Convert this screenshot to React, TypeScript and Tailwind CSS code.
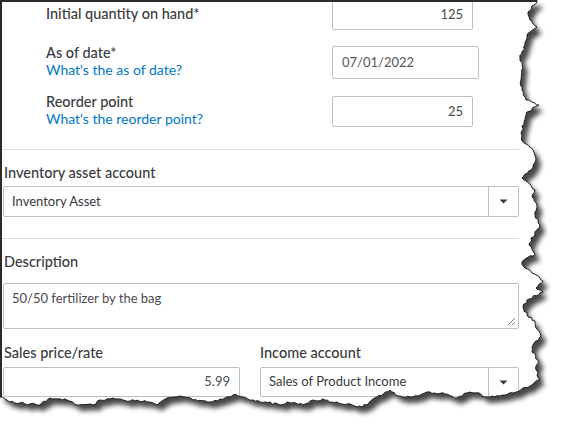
import React from 'react';

const label = 'text-[14.5px] leading-[17px] font-medium text-[#393a3d]';
const link = 'text-[14px] leading-[17px] text-[#0077c5]';
const box = 'border border-[#babec5] rounded-[2px] bg-white';
const value = 'text-[13px] text-[#4a4b4f]';

// torn paper edge: right side top→bottom, then bottom right→left
const EDGE: [number, number][] = [
  [537, 0], [534, 5], [528, 12], [530, 20], [537, 27], [527, 35], [525, 45], [520, 58], [523, 68],
  [521, 80], [522, 90], [526, 100], [539, 105], [527, 112], [524, 122], [521, 133], [523, 142],
  [533, 150], [536, 160], [531, 170], [522, 178], [530, 184], [535, 190], [532, 197], [537, 205],
  [535, 215], [540, 225], [535, 232], [529, 245], [535, 254], [522, 262], [525, 268], [532, 273],
  [543, 281], [536, 288], [543, 292], [527, 300], [523, 307], [527, 315], [535, 321], [536, 328],
  [541, 336], [533, 345], [532, 352], [538, 360], [536, 370], [540, 380],
  [530, 386], [513, 393], [500, 396], [487, 397], [475, 393], [467, 393], [457, 398], [445, 394],
  [427, 392], [418, 396], [410, 397], [398, 396], [390, 390], [377, 397], [367, 405], [357, 407],
  [347, 404], [337, 402], [325, 400], [313, 400], [303, 405], [287, 402], [280, 405], [265, 402],
  [253, 400], [243, 397], [233, 395], [220, 399], [207, 402], [193, 400], [180, 396], [167, 398],
  [157, 405], [147, 402], [135, 401], [123, 400], [110, 399], [100, 400], [93, 405], [77, 405],
  [67, 400], [50, 398], [40, 405], [30, 404], [20, 403], [7, 400], [0, 397],
];

function jagged(points: [number, number][]) {
  let seed = 7;
  const rnd = () => {
    seed = (seed * 16807) % 2147483647;
    return seed / 2147483647 - 0.5;
  };
  const out: [number, number][] = [];
  for (let i = 0; i < points.length - 1; i++) {
    const [x1, y1] = points[i];
    const [x2, y2] = points[i + 1];
    const len = Math.hypot(x2 - x1, y2 - y1);
    const steps = Math.max(1, Math.round(len / 2.5));
    const nx = -(y2 - y1) / len;
    const ny = (x2 - x1) / len;
    for (let s = 0; s < steps; s++) {
      const t = s / steps;
      const j = s === 0 ? 0 : rnd() * 2.4;
      out.push([x1 + (x2 - x1) * t + nx * j, y1 + (y2 - y1) * t + ny * j]);
    }
  }
  out.push(points[points.length - 1]);
  return out;
}

function TornEdge() {
  const pts = jagged(EDGE);
  const line = pts.map(([x, y], i) => `${i ? 'L' : 'M'}${x.toFixed(1)} ${y.toFixed(1)}`).join(' ');
  const outside = `${line} L0 437 L565 437 L565 0 Z`;
  const paper = `M0 0 ${line.replace(/^M/, 'L')} Z`;
  return (
    <svg className="absolute inset-0 pointer-events-none" width="565" height="437" viewBox="0 0 565 437">
      <defs>
        <filter id="blur" x="-10%" y="-10%" width="130%" height="130%">
          <feGaussianBlur stdDeviation="2.6" />
        </filter>
        <clipPath id="outside">
          <path d={outside} />
        </clipPath>
      </defs>
      <path d={outside} fill="#fff" />
      <g clipPath="url(#outside)">
        <path d={paper} fill="#000" opacity="0.72" transform="translate(5 6)" filter="url(#blur)" />
      </g>
      <path d={line} fill="none" stroke="#1e1e1e" strokeWidth="1" />
    </svg>
  );
}

function Caret() {
  return (
    <svg width="9" height="5" viewBox="0 0 9 5">
      <path d="M0.5 0.5h8L4.5 4.5z" fill="#393a3d" />
    </svg>
  );
}

function Select({ text, className }: { text: string; className: string }) {
  return (
    <div className={`${box} ${className} flex items-stretch`}>
      <div className={`${value} flex-1 flex items-center pl-[8px] text-[#393a3d]`}>{text}</div>
      <div className="w-[30px] border-l border-[#babec5] flex items-center justify-center">
        <Caret />
      </div>
    </div>
  );
}

export default function App() {
  return (
    <div className="relative w-[565px] h-[437px] bg-white overflow-hidden" style={{ fontFamily: 'Lato, "Open Sans", sans-serif' }}>
      <div className="w-[565px] h-[480px] border-t-2 border-l-2 border-[#2b2b2b] overflow-hidden">
        {/* stock fields */}
        <div className="pl-[44px]">
          <div className="flex items-start -mt-[3px]">
            <div className={`w-[286px] pt-[6px] ${label}`}>Initial quantity on hand*</div>
            <div className={`${box} w-[141px] h-[31px] flex items-center justify-end pr-[9px] ${value}`}>125</div>
          </div>
          <div className="flex items-start mt-[16px]">
            <div className="w-[286px] -mt-[2px]">
              <div className={label}>As of date*</div>
              <div className={link}>What's the as of date?</div>
            </div>
            <div className={`${box} w-[147px] h-[33px] flex items-center pl-[9px] ${value} text-[#55565a]`}>07/01/2022</div>
          </div>
          <div className="flex items-start mt-[17px]">
            <div className="w-[286px] -mt-[3px]">
              <div className={label}>Reorder point</div>
              <div className={link}>What's the reorder point?</div>
            </div>
            <div className={`${box} w-[141px] h-[31px] flex items-center justify-end pr-[9px] ${value}`}>25</div>
          </div>
        </div>

        <div className="mt-[22px] w-[517px] h-px bg-[#dcdcdc]" />

        <div className="pl-px w-[517px]">
          <div className={`mt-[13px] pl-px ${label} leading-[20px]`}>Inventory asset account</div>
          <Select text="Inventory Asset" className="mt-[3px] h-[31px]" />
        </div>

        <div className="mt-[21px] w-[517px] h-px bg-[#dcdcdc]" />

        <div className="pl-px w-[517px]">
          <div className={`mt-[13px] pl-px ${label} leading-[20px]`}>Description</div>
          <div className={`${box} mt-[11px] h-[46px] relative pl-[8px] pt-[5px] ${value}`}>
            50/50 fertilizer by the bag
            <svg className="absolute right-[2px] bottom-[2px]" width="9" height="9" viewBox="0 0 9 9">
              <path d="M1 8L8 1M5 8L8 5" stroke="#7a7a7a" strokeWidth="1" />
            </svg>
          </div>

          <div className="mt-[14px] flex gap-[20px]">
            <div className="w-[237px]">
              <div className={`pl-px ${label} leading-[20px]`}>Sales price/rate</div>
              <div className={`${box} mt-[4px] h-[30px] flex items-center justify-end pr-[9px] ${value}`}>5.99</div>
            </div>
            <div className="flex-1">
              <div className={`${label} leading-[20px]`}>Income account</div>
              <Select text="Sales of Product Income" className="mt-[4px] h-[30px]" />
            </div>
          </div>
        </div>
      </div>
      <TornEdge />
    </div>
  );
}
